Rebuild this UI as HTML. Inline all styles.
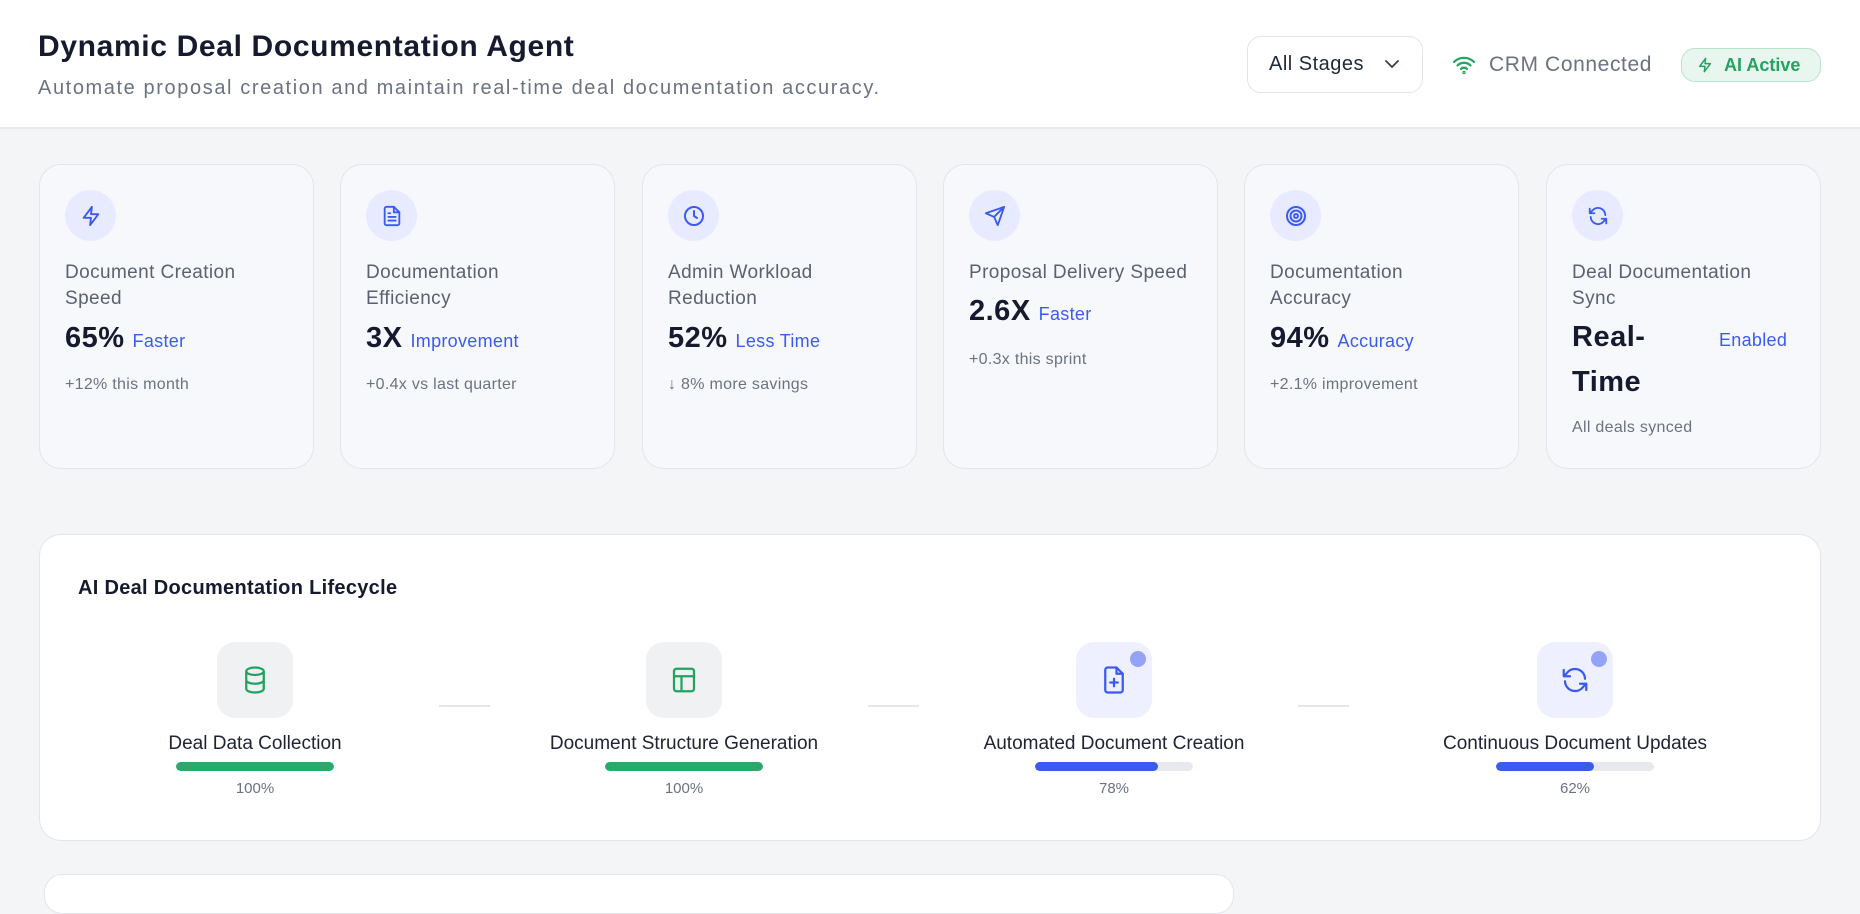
<!DOCTYPE html>
<html><head><meta charset="utf-8"><style>
*{box-sizing:border-box;margin:0;padding:0}
body{width:1860px;height:877px;overflow:hidden;background:#f4f5f7;font-family:"Liberation Sans",sans-serif;position:relative;color:#111827}
.hdr{position:absolute;left:0;top:0;width:1860px;height:129px;background:#fff;border-bottom:2px solid #e8eaef}
.t{position:absolute;left:38px;top:30px;font-size:30px;font-weight:700;color:#161a2e;letter-spacing:0.65px}
.st{position:absolute;left:38px;top:77px;font-size:20px;color:#6b7280;letter-spacing:1.6px}
.dd{position:absolute;left:1247px;top:36px;width:176px;height:57px;border:1.5px solid #e2e4ea;border-radius:14px;font-size:20px;color:#1f2937;padding:16px 0 0 21px;letter-spacing:0.5px}
.dd svg{position:absolute;right:22px;top:22px}
.crm{position:absolute;left:1452px;top:53px;font-size:21px;color:#6b7280;letter-spacing:0.6px}
.crm svg{position:absolute;left:0;top:2px}
.crm span{margin-left:37px}
.ai{position:absolute;left:1681px;top:48px;width:140px;height:34px;border:1.5px solid #b9e3cb;background:#e9f6ef;border-radius:14px;color:#22a35f;font-size:18px;font-weight:700;padding:6px 0 0 42px}
.ai svg{position:absolute;left:15px;top:7px}
.card{position:absolute;top:164px;width:275px;height:305px;background:#f7f8fc;border:1.5px solid #e3e5eb;border-radius:22px}
.ic{position:absolute;left:25px;top:25px;width:51px;height:51px;border-radius:50%;background:#e8ebff;display:flex;align-items:center;justify-content:center}
.lb{position:absolute;left:25px;top:95px;font-size:19px;line-height:26px;color:#5b6170;width:240px;letter-spacing:0.4px}
.vl{position:absolute;left:25px;top:157px;font-size:29px;font-weight:700;color:#161a2e;letter-spacing:0.5px}
.vl span{font-size:18px;font-weight:400;color:#3b5bf0;margin-left:8px;letter-spacing:0.3px}
.sb{position:absolute;left:25px;top:211px;font-size:16px;color:#6b7280;letter-spacing:0.3px}
.lc{position:absolute;left:39px;top:534px;width:1782px;height:307px;background:#fff;border:1.5px solid #e3e5eb;border-radius:22px}
.lt{position:absolute;left:38px;top:42px;font-size:20px;font-weight:700;color:#161a2e;letter-spacing:0.3px}
.stp{position:absolute;top:107px;width:340px;margin-left:-170px;text-align:center}
.bx{width:76px;height:76px;border-radius:18px;background:#eff1f3;margin:0 auto;position:relative;display:flex;align-items:center;justify-content:center}
.bx.b{background:#eef0ff}
.dot{position:absolute;right:6px;top:9px;width:16px;height:16px;border-radius:50%;background:#95a3f7}
.sl{font-size:19px;color:#1f2333;margin-top:15px}
.bar{width:158px;height:9px;border-radius:5px;background:#e7e9ee;margin:7px auto 0;overflow:hidden}
.bar div{height:100%;border-radius:5px}
.pc{font-size:15px;color:#6b7280;margin-top:9px}
.cn{position:absolute;top:170px;width:51px;height:2px;background:#e4e6eb}
.bot{position:absolute;left:44px;top:874px;width:1190px;height:40px;background:#fff;border:1.5px solid #e3e5eb;border-radius:18px}
</style></head><body>
<div class="hdr">
<div class="t">Dynamic Deal Documentation Agent</div>
<div class="st">Automate proposal creation and maintain real-time deal documentation accuracy.</div>
<div class="dd">All Stages<svg width="16" height="10" viewBox="0 0 16 10"><path d="M2 2l6 6 6-6" fill="none" stroke="#374151" stroke-width="1.8" stroke-linecap="round"/></svg></div>
<div class="crm"><svg width="24" height="20" viewBox="0 0 24 20" fill="none" stroke="#22a35f" stroke-width="2.2" stroke-linecap="round"><path d="M2 7a14 14 0 0 1 20 0"/><path d="M5.5 10.5a9 9 0 0 1 13 0"/><path d="M9 14a4 4 0 0 1 6 0"/><circle cx="12" cy="17.5" r="0.6"/></svg><span>CRM Connected</span></div>
<div class="ai"><svg width="16" height="18" viewBox="0 0 24 24" fill="none" stroke="#22a35f" stroke-width="2.2" stroke-linejoin="round"><path d="M13 2L4 14h8l-1 8 9-12h-8z"/></svg>AI Active</div>
</div>

<div class="card" style="left:39px"><div class="ic"><svg width="22" height="22" viewBox="0 0 24 24" fill="none" stroke="#3b5bf0" stroke-width="2" stroke-linejoin="round"><path d="M13 2L4 14h8l-1 8 9-12h-8z"/></svg></div>
<div class="lb">Document Creation<br>Speed</div><div class="vl">65%<span>Faster</span></div><div class="sb">+12% this month</div></div>

<div class="card" style="left:340px"><div class="ic"><svg width="22" height="22" viewBox="0 0 24 24" fill="none" stroke="#3b5bf0" stroke-width="2" stroke-linejoin="round" stroke-linecap="round"><path d="M14 2H6a2 2 0 0 0-2 2v16a2 2 0 0 0 2 2h12a2 2 0 0 0 2-2V8z"/><path d="M14 2v6h6M8 13h8M8 17h8M8 9h2"/></svg></div>
<div class="lb">Documentation<br>Efficiency</div><div class="vl">3X<span>Improvement</span></div><div class="sb">+0.4x vs last quarter</div></div>

<div class="card" style="left:642px"><div class="ic"><svg width="24" height="24" viewBox="0 0 24 24" fill="none" stroke="#3b5bf0" stroke-width="2" stroke-linecap="round"><circle cx="12" cy="12" r="9"/><path d="M12 7v5l3 2"/></svg></div>
<div class="lb">Admin Workload<br>Reduction</div><div class="vl">52%<span>Less Time</span></div><div class="sb">↓ 8% more savings</div></div>

<div class="card" style="left:943px"><div class="ic"><svg width="22" height="22" viewBox="0 0 24 24" fill="none" stroke="#3b5bf0" stroke-width="2" stroke-linejoin="round"><path d="M22 2L11 13M22 2l-7 20-4-9-9-4z"/></svg></div>
<div class="lb">Proposal Delivery Speed</div><div class="vl" style="top:130px">2.6X<span>Faster</span></div><div class="sb" style="top:186px">+0.3x this sprint</div></div>

<div class="card" style="left:1244px"><div class="ic"><svg width="24" height="24" viewBox="0 0 24 24" fill="none" stroke="#3b5bf0" stroke-width="2"><circle cx="12" cy="12" r="9"/><circle cx="12" cy="12" r="5.5"/><circle cx="12" cy="12" r="2"/></svg></div>
<div class="lb">Documentation<br>Accuracy</div><div class="vl">94%<span>Accuracy</span></div><div class="sb">+2.1% improvement</div></div>

<div class="card" style="left:1546px"><div class="ic"><svg width="22" height="22" viewBox="0 0 24 24" fill="none" stroke="#3b5bf0" stroke-width="2" stroke-linecap="round" stroke-linejoin="round"><path d="M20 11a8 8 0 0 0-14.5-4.5L3 9M3 4v5h5M4 13a8 8 0 0 0 14.5 4.5L21 15M21 20v-5h-5"/></svg></div>
<div class="lb">Deal Documentation<br>Sync</div><div class="vl" style="line-height:45px;top:150px">Real-<br>Time</div><div style="position:absolute;left:172px;top:165px;font-size:18px;color:#3b5bf0;letter-spacing:0.3px">Enabled</div><div class="sb" style="top:254px">All deals synced</div></div>

<div class="lc">
<div class="lt">AI Deal Documentation Lifecycle</div>
<div class="cn" style="left:399px"></div><div class="cn" style="left:828px"></div><div class="cn" style="left:1258px"></div>
<div class="stp" style="left:215px"><div class="bx"><svg width="30" height="30" viewBox="0 0 24 24" fill="none" stroke="#22a35f" stroke-width="1.8"><ellipse cx="12" cy="5" rx="7" ry="3"/><path d="M5 5v14c0 1.7 3.1 3 7 3s7-1.3 7-3V5M5 12c0 1.7 3.1 3 7 3s7-1.3 7-3"/></svg></div>
<div class="sl">Deal Data Collection</div><div class="bar"><div style="width:100%;background:#2aa96b"></div></div><div class="pc">100%</div></div>
<div class="stp" style="left:644px"><div class="bx"><svg width="30" height="30" viewBox="0 0 24 24" fill="none" stroke="#22a35f" stroke-width="1.8"><rect x="4" y="3" width="16" height="18" rx="2"/><path d="M4 9h16M10 9v12"/></svg></div>
<div class="sl">Document Structure Generation</div><div class="bar"><div style="width:100%;background:#2aa96b"></div></div><div class="pc">100%</div></div>
<div class="stp" style="left:1074px"><div class="bx b"><div class="dot"></div><svg width="30" height="30" viewBox="0 0 24 24" fill="none" stroke="#3b5bf0" stroke-width="1.8" stroke-linejoin="round" stroke-linecap="round"><path d="M14 2H7a2 2 0 0 0-2 2v16a2 2 0 0 0 2 2h10a2 2 0 0 0 2-2V7z"/><path d="M14 2v5h5M12 11v6M9 14h6"/></svg></div>
<div class="sl">Automated Document Creation</div><div class="bar"><div style="width:78%;background:#3b5bf0"></div></div><div class="pc">78%</div></div>
<div class="stp" style="left:1535px"><div class="bx b"><div class="dot"></div><svg width="30" height="30" viewBox="0 0 24 24" fill="none" stroke="#3b5bf0" stroke-width="1.8" stroke-linecap="round" stroke-linejoin="round"><path d="M20 11a8 8 0 0 0-14.5-4.5L3 9M3 4v5h5M4 13a8 8 0 0 0 14.5 4.5L21 15M21 20v-5h-5"/></svg></div>
<div class="sl">Continuous Document Updates</div><div class="bar"><div style="width:62%;background:#3b5bf0"></div></div><div class="pc">62%</div></div>
</div>
<div class="bot"></div>
</body></html>
